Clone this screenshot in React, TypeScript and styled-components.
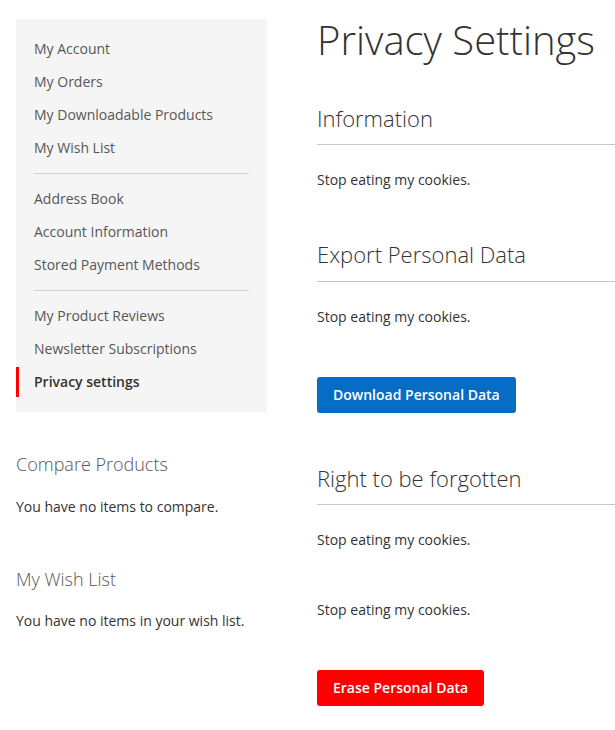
import React from "react";
import styled, { createGlobalStyle } from "styled-components";

const Global = createGlobalStyle`
  html, body { margin: 0; padding: 0; background: #fff; }
  body {
    font-family: "Open Sans", "Liberation Sans", sans-serif;
    font-size: 14px;
    line-height: 20px;
    color: #333;
    overflow: hidden;
  }
  * { box-sizing: border-box; }
`;

const Page = styled.div`
  display: flex;
  align-items: flex-start;
  width: 615px;
  padding: 18px 0 0 16px;
`;

const Sidebar = styled.aside`
  width: 251px;
  flex: none;
  margin-top: 1px;
  display: flex;
  flex-direction: column;
`;

const Nav = styled.ul`
  list-style: none;
  margin: 0 0 40px;
  padding: 15px 0;
  background: #f5f5f5;
`;

const NavItem = styled.li<{ $active?: boolean }>`
  margin: 3px 0 0;
  &:first-child { margin-top: 0; }
  display: block;
  padding: 5px 18px 5px ${(p) => (p.$active ? "15px" : "18px")};
  border-left: ${(p) => (p.$active ? "3px solid #ff0000" : "none")};
  color: ${(p) => (p.$active ? "#333" : "#575757")};
  font-weight: ${(p) => (p.$active ? 600 : 400)};
  font-size: 14px;
  line-height: 20px;
`;

const Delimiter = styled.li`
  display: block;
  margin: 10px 18px;
  border-top: 1px solid #d1d1d1;
`;

const SideBlock = styled.div`
  margin-bottom: 50px;
`;

const SideTitle = styled.div`
  font-size: 18px;
  font-weight: 300;
  line-height: 25.7px;
  color: #575757;
  margin-bottom: 19px;
`;

const Text = styled.p<{ $mb?: number }>`
  margin: 0 0 ${(p) => p.$mb ?? 0}px;
  font-size: 14px;
  line-height: 20px;
  color: #333;
`;

const Main = styled.main`
  flex: 1;
  margin-left: 50px;
  min-width: 0;
  display: flex;
  flex-direction: column;
`;

const PageTitle = styled.h1`
  margin: 0 0 41px;
  font-size: 40px;
  font-weight: 300;
  line-height: 44px;
  color: #333;
  white-space: nowrap;
`;

const Block = styled.section`
  margin-bottom: 49px;
`;

const BlockTitle = styled.h2`
  margin: 0 0 25px;
  padding-bottom: 10px;
  border-bottom: 1px solid #c6c6c6;
  font-size: 22px;
  font-weight: 300;
  line-height: 31.4px;
  color: #333;
  white-space: nowrap;
`;

const Button = styled.button<{ $variant: "primary" | "danger" }>`
  display: inline-block;
  margin: 0;
  border: none;
  border-radius: 3px;
  padding: 7px 16px;
  font-family: "Open Sans", "Liberation Sans", sans-serif;
  font-size: 14px;
  font-weight: 600;
  line-height: 22px;
  color: #fff;
  background: ${(p) => (p.$variant === "primary" ? "#066cc4" : "#ff0000")};
  cursor: pointer;
`;

const Actions = styled.div`
  margin: 50px 0 1px;
`;

const groups = [
  ["My Account", "My Orders", "My Downloadable Products", "My Wish List"],
  ["Address Book", "Account Information", "Stored Payment Methods"],
  ["My Product Reviews", "Newsletter Subscriptions", "Privacy settings"],
];

export default function App() {
  return (
    <>
      <Global />
      <Page>
        <Sidebar>
          <Nav>
            {groups.map((g, gi) => (
              <React.Fragment key={gi}>
                {gi > 0 && <Delimiter />}
                {g.map((label) => (
                  <NavItem key={label} $active={label === "Privacy settings"}>
                    {label}
                  </NavItem>
                ))}
              </React.Fragment>
            ))}
          </Nav>
          <SideBlock>
            <SideTitle>Compare Products</SideTitle>
            <Text>You have no items to compare.</Text>
          </SideBlock>
          <SideBlock>
            <SideTitle>My Wish List</SideTitle>
            <Text>You have no items in your wish list.</Text>
          </SideBlock>
        </Sidebar>
        <Main>
          <PageTitle>Privacy Settings</PageTitle>
          <Block>
            <BlockTitle>Information</BlockTitle>
            <Text>Stop eating my cookies.</Text>
          </Block>
          <Block>
            <BlockTitle>Export Personal Data</BlockTitle>
            <Text>Stop eating my cookies.</Text>
            <Actions>
              <Button $variant="primary">Download Personal Data</Button>
            </Actions>
          </Block>
          <Block>
            <BlockTitle>Right to be forgotten</BlockTitle>
            <Text $mb={50}>Stop eating my cookies.</Text>
            <Text>Stop eating my cookies.</Text>
            <Actions>
              <Button $variant="danger">Erase Personal Data</Button>
            </Actions>
          </Block>
        </Main>
      </Page>
    </>
  );
}
